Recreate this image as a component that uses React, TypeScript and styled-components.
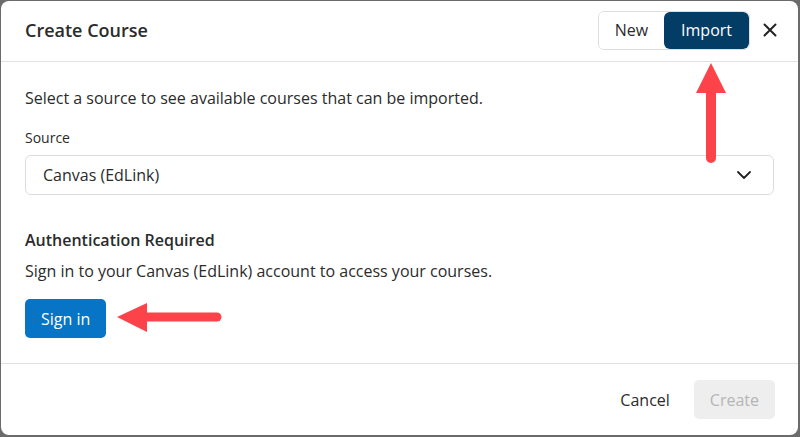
import styled, { createGlobalStyle } from "styled-components";

const GlobalStyle = createGlobalStyle`
  html, body {
    margin: 0;
    padding: 0;
    background-color: #6b6b6b;
  }
  body {
    font-family: "Open Sans", "Liberation Sans", sans-serif;
    color: #2b2b2b;
  }
`;

const Dialog = styled.div`
  position: relative;
  width: 797px;
  height: 434px;
  margin: 1px 0 0 1px;
  background-color: #fff;
  border-radius: 8px;
  display: flex;
  flex-direction: column;
  overflow: hidden;
`;

const Header = styled.div`
  height: 60px;
  display: flex;
  align-items: center;
  padding: 0 16px 0 24px;
  border-bottom: 1px solid #e1e1e1;
`;

const Title = styled.h2`
  flex: 1;
  margin: 0 0 2px;
  font-size: 18px;
  font-weight: 600;
  line-height: 24px;
  color: #2b2b2b;
`;

const Toggle = styled.div`
  display: flex;
  height: 39px;
  margin-bottom: 2px;
  border: 1px solid #dedede;
  border-radius: 6px;
  overflow: hidden;
  margin-right: 8px;
  box-sizing: border-box;
`;

const ToggleButton = styled.button<{ $active?: boolean }>`
  border: none;
  margin: 0;
  padding: 0 ${(p) => (p.$active ? "17px" : "16px")};
  font-family: inherit;
  font-size: 16px;
  cursor: pointer;
  background-color: ${(p) => (p.$active ? "#033d66" : "#fff")};
  color: ${(p) => (p.$active ? "#fff" : "#2b2b2b")};
  border-radius: ${(p) => (p.$active ? "6px" : "0")};
`;

const CloseButton = styled.button`
  width: 24px;
  height: 24px;
  margin-bottom: 2px;
  border: none;
  background: none;
  padding: 0;
  display: flex;
  align-items: center;
  justify-content: center;
  cursor: pointer;
  color: #222;
`;

const Body = styled.div`
  flex: 1;
  padding: 25px 24px 0 24px;
  display: flex;
  flex-direction: column;
`;

const Text = styled.p`
  margin: 0;
  font-size: 16px;
  line-height: 22px;
  color: #2b2b2b;
`;

const Label = styled.label`
  margin-top: 20px;
  font-size: 14px;
  line-height: 18px;
  color: #2b2b2b;
`;

const Select = styled.div`
  margin-top: 8px;
  height: 40px;
  box-sizing: border-box;
  border: 1px solid #dcdcdc;
  border-radius: 6px;
  display: flex;
  align-items: center;
  justify-content: space-between;
  padding: 0 22px 0 17px;
  font-size: 16px;
  color: #2b2b2b;
`;

const SectionTitle = styled.h3`
  margin: 34px 0 0;
  font-size: 16px;
  font-weight: 600;
  line-height: 22px;
  color: #2b2b2b;
`;

const SectionText = styled(Text)`
  margin-top: 9px;
`;

const PrimaryButton = styled.button`
  align-self: flex-start;
  margin-top: 17px;
  height: 39px;
  padding: 0 16px;
  border: none;
  border-radius: 5px;
  background-color: #0874c6;
  color: #fff;
  font-family: inherit;
  font-size: 16px;
  cursor: pointer;
`;

const Footer = styled.div`
  height: 71px;
  border-top: 1px solid #e1e1e1;
  display: flex;
  align-items: center;
  justify-content: flex-end;
  gap: 8px;
  padding: 0 23px 0 0;
`;

const FooterButton = styled.button<{ $disabled?: boolean }>`
  height: 39px;
  padding: 0 16px;
  border: none;
  border-radius: 5px;
  font-family: inherit;
  font-size: 16px;
  background-color: ${(p) => (p.$disabled ? "#eeeeee" : "transparent")};
  color: ${(p) => (p.$disabled ? "#b5b5b5" : "#2b2b2b")};
  cursor: ${(p) => (p.$disabled ? "default" : "pointer")};
`;

const Annotation = styled.svg`
  position: absolute;
  pointer-events: none;
`;

function App() {
  return (
    <>
      <GlobalStyle />
      <Dialog>
        <Header>
          <Title>Create Course</Title>
          <Toggle>
            <ToggleButton>New</ToggleButton>
            <ToggleButton $active>Import</ToggleButton>
          </Toggle>
          <CloseButton aria-label="Close">
            <svg width="14" height="14" viewBox="0 0 14 14">
              <path
                d="M1.5 1.5 L12.5 12.5 M12.5 1.5 L1.5 12.5"
                stroke="currentColor"
                strokeWidth="2"
                strokeLinecap="round"
              />
            </svg>
          </CloseButton>
        </Header>

        <Body>
          <Text>Select a source to see available courses that can be imported.</Text>
          <Label>Source</Label>
          <Select>
            <span>Canvas (EdLink)</span>
            <svg width="14" height="8" viewBox="0 0 14 8">
              <path
                d="M1 1 L7 7 L13 1"
                fill="none"
                stroke="#222"
                strokeWidth="1.8"
                strokeLinecap="round"
                strokeLinejoin="round"
              />
            </svg>
          </Select>

          <SectionTitle>Authentication Required</SectionTitle>
          <SectionText>
            Sign in to your Canvas (EdLink) account to access your courses.
          </SectionText>
          <PrimaryButton>Sign in</PrimaryButton>
        </Body>

        <Footer>
          <FooterButton>Cancel</FooterButton>
          <FooterButton $disabled>Create</FooterButton>
        </Footer>

        {/* annotation arrows */}
        <Annotation
          width="34"
          height="104"
          viewBox="0 0 34 104"
          style={{ left: 693, top: 61 }}
        >
          <path d="M17 1 L32 31 L2 31 Z" fill="#fb4349" />
          <line
            x1="17"
            y1="28"
            x2="17"
            y2="96"
            stroke="#fb4349"
            strokeWidth="10"
            strokeLinecap="round"
          />
        </Annotation>
        <Annotation
          width="110"
          height="34"
          viewBox="0 0 110 34"
          style={{ left: 115, top: 299 }}
        >
          <path d="M1 17 L31 3 L31 32 Z" fill="#fb4349" />
          <line
            x1="28"
            y1="17"
            x2="101"
            y2="17"
            stroke="#fb4349"
            strokeWidth="9"
            strokeLinecap="round"
          />
        </Annotation>
      </Dialog>
    </>
  );
}

export default App;
